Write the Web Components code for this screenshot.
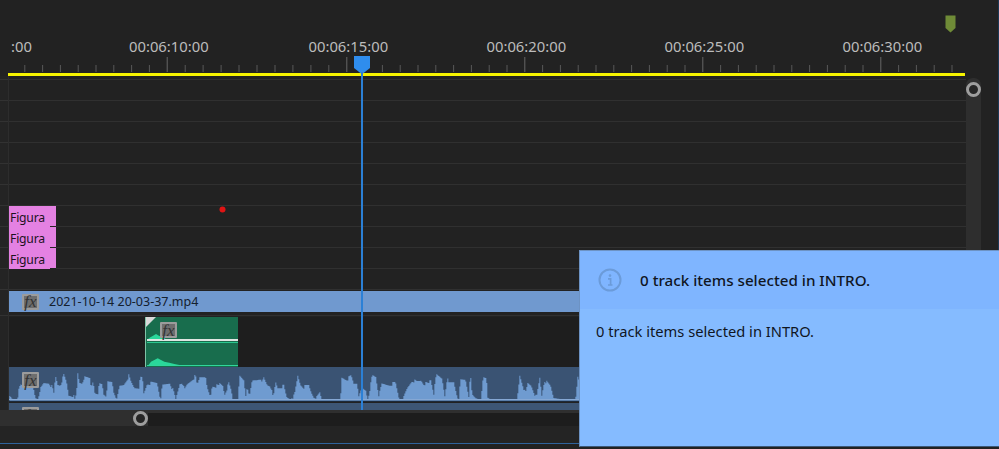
<!DOCTYPE html>
<html>
<head>
<meta charset="utf-8">
<title>Timeline</title>
<style>
  html, body { margin: 0; padding: 0; background: #222222; overflow: hidden; }
</style>
</head>
<body>
<x-timeline>
  <x-ruler slot="ruler"></x-ruler>

  <x-track height="4"></x-track>
  <x-track></x-track>
  <x-track></x-track>
  <x-track></x-track>
  <x-track></x-track>
  <x-track></x-track>
  <x-track></x-track>
  <x-track><x-title-clip>Figura</x-title-clip></x-track>
  <x-track><x-title-clip>Figura</x-title-clip></x-track>
  <x-track><x-title-clip last>Figura</x-title-clip></x-track>
  <x-track></x-track>
  <x-track height="22" noline><x-video-clip>2021-10-14 20-03-37.mp4</x-video-clip></x-track>
  <x-track height="5" noline linetop="3"></x-track>
  <x-track height="50" noline dark><x-audio-green></x-audio-green></x-track>
  <x-track height="36" noline><x-audio-clip></x-audio-clip></x-track>
  <x-track height="7" noline><x-audio-tail></x-audio-tail></x-track>

  <x-notice>0 track items selected in INTRO.</x-notice>
</x-timeline>

<script>
  customElements.define('x-fx', class extends HTMLElement {
    constructor() {
      super();
      this.attachShadow({ mode: 'open' }).innerHTML = `
        <style>
          :host {
            display: flex; align-items: center; justify-content: center; box-sizing: border-box;
            flex: none; position: relative; width: 17px; height: 16px;
            border: 2px solid #9b9b9b; border-radius: 1px; background: #6e6e6e;
            color: #333333; font: italic 17px/1 "Liberation Serif", serif;
          }
        </style>fx`;
    }
  });

  customElements.define('x-wave', class extends HTMLElement {
    static get observedAttributes() { return ['points', 'box', 'fill']; }
    constructor() {
      super();
      this.attachShadow({ mode: 'open' }).innerHTML = `
        <style>
          :host { display: block; position: absolute; left: 0; top: 0; }
          svg { display: block; }
        </style>
        <svg preserveAspectRatio="none"><polygon></polygon></svg>`;
    }
    attributeChangedCallback() {
      const svg = this.shadowRoot.querySelector('svg');
      const poly = this.shadowRoot.querySelector('polygon');
      const box = (this.getAttribute('box') || '0 0 1 1').split(' ').map(Number);
      svg.setAttribute('viewBox', box.join(' '));
      svg.setAttribute('width', box[2] / 3);
      svg.setAttribute('height', box[3] / 3);
      poly.setAttribute('points', this.getAttribute('points') || '');
      poly.setAttribute('fill', this.getAttribute('fill') || '#6f9bd0');
    }
  });

  customElements.define('x-ruler', class extends HTMLElement {
    constructor() {
      super();
      const root = this.attachShadow({ mode: 'open' });
      root.innerHTML = `
        <style>
          :host { display: block; position: relative; height: 76px; }
          .labels {
            display: flex; box-sizing: border-box; margin-left: 8px; width: 957px; height: 56px;
            padding-top: 36px; overflow: hidden; color: #bcbcbc;
            font: 14.8px/20px "Noto Sans", sans-serif;
          }
          .labels span { flex: none; width: 178px; white-space: nowrap; }
          .labels .cut { width: 118px; margin-left: 3px; }
          .labels .wide { width: 179.5px; }
          svg { display: block; }
          .line { margin-left: 8px; width: 957px; height: 3px; background: #f7f400; }
          .head, .marker { position: absolute; }
          .head { left: 354px; top: 56px; }
          .marker { left: 945px; top: 15px; }
        </style>
        <div class="labels">
          <span class="cut">:00</span>
          <span class="wide">00:06:10:00</span>
          <span>00:06:15:00</span>
          <span>00:06:20:00</span>
          <span>00:06:25:00</span>
          <span>00:06:30:00</span>
        </div>
        <svg width="999" height="17"></svg>
        <div class="line"></div>
        <svg class="marker" width="11" height="18"><path d="M0.5 0.5H10.5V13L5.5 17.5L0.5 13Z" fill="#6f8b37"/></svg>
        <svg class="head" width="16" height="18"><path d="M0 0H16V12L9 17.5H7L0 12Z" fill="#2f8ded"/></svg>`;
      // ticks: one second apart is 10 steps, the 10-15 span is a bit wider in the panel
      const majors = [-11.3, 166.7, 346.3, 524.3, 702.3, 880.3, 1058.3];
      let ticks = '';
      for (let m = 0; m < majors.length - 1; m++) {
        const step = (majors[m + 1] - majors[m]) / 10;
        for (let i = 0; i < 10; i++) {
          const x = majors[m] + i * step;
          if (x < 10 || x > 952) continue;
          const top = i === 0 ? 1 : 9;
          ticks += `<rect x="${x.toFixed(1)}" y="${top}" width="1" height="${16 - top}" fill="${i === 0 ? '#666' : '#585858'}"/>`;
        }
      }
      root.querySelector('svg').innerHTML = ticks;
    }
  });

  customElements.define('x-track', class extends HTMLElement {
    constructor() {
      super();
      const h = this.getAttribute('height') || 21;
      const line = this.hasAttribute('noline') ? 'none' : 'linear-gradient(#303030, #303030)';
      const top = this.getAttribute('linetop');
      this.attachShadow({ mode: 'open' }).innerHTML = `
        <style>
          :host {
            display: flex; height: ${h}px; position: relative;
            background: ${top ? 'linear-gradient(#303030, #303030) 0 ' + top + 'px / 100% 1px no-repeat' : line + ' 0 100% / 100% 1px no-repeat'};
          }
          .gutter { flex: none; width: 8px; border-right: 1px solid #2d2d2d; background: rgba(255, 255, 255, 0.012); }
          .lane { flex: 1; min-width: 0; display: flex; align-items: flex-start; ${this.hasAttribute('dark') ? 'background: #1e1e1e;' : ''} }
        </style>
        <div class="gutter"></div>
        <div class="lane"><slot></slot></div>`;
    }
  });

  customElements.define('x-title-clip', class extends HTMLElement {
    constructor() {
      super();
      const last = this.hasAttribute('last');
      this.attachShadow({ mode: 'open' }).innerHTML = `
        <style>
          :host {
            display: block; position: relative; box-sizing: border-box; width: 47px; height: 21px; padding-left: 1px;
            background: #e481e2; color: #1d121d; font: 12.2px/23px "Noto Sans", sans-serif; letter-spacing: -0.2px;
          }
          :host::after {
            content: ""; position: absolute; left: 41px; right: 0; bottom: 0; height: 1px;
            background: ${last ? '#222222' : '#2a2226'};
          }
        </style><slot></slot>`;
    }
  });

  customElements.define('x-video-clip', class extends HTMLElement {
    constructor() {
      super();
      this.attachShadow({ mode: 'open' }).innerHTML = `
        <style>
          :host {
            display: flex; align-items: center; gap: 10px; box-sizing: border-box; flex: 1; height: 21px;
            margin-top: 1px; padding-left: 13px; background: #7099cf; color: #14202e;
            font: 12.5px/21px "Noto Sans", sans-serif; white-space: nowrap;
          }
        </style>
        <x-fx></x-fx><slot></slot>`;
    }
  });

  customElements.define('x-audio-green', class extends HTMLElement {
    constructor() {
      super();
      this.attachShadow({ mode: 'open' }).innerHTML = `
        <style>
          :host {
            display: block; position: relative; box-sizing: border-box; width: 93px; height: 50px;
            margin-left: 136px; padding: 5px 0 0 14px; background: #186d4d; border-left: 1px solid #7fc4a8;
          }
          .rule { position: absolute; left: 1px; right: 0; top: 22px; height: 2px; background: #dfe6e2; }
          .sub { position: absolute; left: 1px; right: 0; top: 25px; height: 1px; background: #2bc78f; }
          .floor { position: absolute; left: 1px; right: 0; bottom: 1px; height: 1px; background: #2fd79b; }
          .corner { position: absolute; left: 0; top: 0; }
        </style>
        <x-wave fill="#2ad79a" box="45 21 279 150"
          points="50,88 58,82 65,78 75,72 85,78 95,80 105,88 50,88 50,168 60,155 70,150 80,145 90,150 100,155 115,158 130,162 145,165 325,168 50,168"></x-wave>
        <div class="rule"></div><div class="sub"></div><div class="floor"></div>
        <x-fx></x-fx>
        <svg class="corner" width="10" height="10"><path d="M0 0H10L0 10Z" fill="#d9d9d9"/></svg>`;
    }
  });

  const wavePts = (() => {
    const a = '28,105 38,113 50,113 55,85 60,70 70,72 75,45 90,50 100,85 105,108 112,112 118,85 130,65 145,62 155,75 160,95 165,42 172,68 180,68 190,40 198,60 205,100 218,100 224,112 228,95 232,35 237,62 245,62 250,48 268,48 272,75 278,55 285,100 292,100 296,65 305,65 310,95 318,100 322,62 335,60 340,90 350,112 357,75 370,68 385,42 392,62 402,78 415,75 420,48 426,48 430,95 440,65 470,62 480,110 486,72 508,62 518,85 526,112 538,65 546,60 552,85 560,68 585,42 590,70 600,40';
    const b = '0,45 14,40 20,80 30,105 35,72 55,72 58,65 68,72 72,98 85,65 92,85 97,112 112,112 118,45 130,55 136,100 140,72 148,100 155,58 170,52 178,48 183,65 190,48 200,68 210,70 218,108 222,85 225,60 232,78 250,72 258,105 270,113 282,100 292,42 300,68 310,75 325,70 332,90 345,112 358,92 364,112 420,112 424,48 440,52 452,42 460,65 470,62 476,105 484,80 496,85 502,112 510,72 515,42 526,45 535,100 540,70 570,68 585,62 596,110 600,112';
    const c = '8,112 20,80 35,55 50,60 62,55 70,65 85,65 90,50 100,95 105,40 125,50 133,100 140,48 145,65 160,60 170,100 175,112 180,55 195,52 205,100 210,40 215,100 232,112 242,112 248,48 258,48 262,105 268,113 350,113 358,40 375,95 382,65 392,70 408,108 418,48 424,100 432,55 450,72 460,108 490,113 525,113 532,40 540,60';
    const shift = (s, dx) => s.split(' ').map(p => {
      const [x, y] = p.split(',').map(Number);
      return [x + dx, y];
    });
    const all = [...shift(a, 0), ...shift(b, 600), ...shift(c, 1200)];
    // resample into thin columns, with a little fixed jitter on the loud parts
    const out = [];
    let seg = 0;
    for (let x = all[0][0]; x <= all[all.length - 1][0]; x += 3) {
      while (seg < all.length - 2 && all[seg + 1][0] <= x) seg++;
      const [x0, y0] = all[seg];
      const [x1, y1] = all[seg + 1];
      let y = y0 + (y1 - y0) * (x - x0) / (x1 - x0);
      if (y < 108) y += ((x * 37) % 11) - 5;
      out.push(x + ',' + y.toFixed(1), (x + 3) + ',' + y.toFixed(1));
    }
    return out.join(' ') + ' 1740,116 28,116';
  })();

  customElements.define('x-audio-clip', class extends HTMLElement {
    constructor() {
      super();
      this.attachShadow({ mode: 'open' }).innerHTML = `
        <style>
          :host {
            display: block; position: relative; box-sizing: border-box; flex: 1; height: 35px;
            padding: 5px 0 0 13px; background: #3a5373; border-bottom: 2px solid #1d2a39;
          }
          .base { position: absolute; left: 0; right: 0; bottom: 0; height: 1px; background: #86a8d4; }
        </style>
        <x-wave box="27 15 1713 101" points="${wavePts}"></x-wave>
        <div class="base"></div>
        <x-fx></x-fx>`;
    }
  });

  customElements.define('x-audio-tail', class extends HTMLElement {
    constructor() {
      super();
      this.attachShadow({ mode: 'open' }).innerHTML = `
        <style>
          :host {
            display: block; box-sizing: border-box; flex: 1; height: 7px; overflow: hidden;
            padding: 4px 0 0 13px; background: #3d5675;
          }
        </style>
        <x-fx></x-fx>`;
    }
  });

  customElements.define('x-thumb', class extends HTMLElement {
    constructor() {
      super();
      this.attachShadow({ mode: 'open' }).innerHTML = `
        <style>
          :host {
            display: block; flex: none; box-sizing: border-box; width: 15px; height: 15px;
            border: 3px solid #9e9e9e; border-radius: 50%; background: #262626;
          }
        </style>`;
    }
  });

  customElements.define('x-notice', class extends HTMLElement {
    constructor() {
      super();
      const text = this.textContent;
      this.attachShadow({ mode: 'open' }).innerHTML = `
        <style>
          :host {
            display: block; position: absolute; left: 579px; top: 250px; width: 420px; height: 197px;
            box-sizing: border-box; border-left: 1px solid #6d93c4; border-top: 1px solid #6d93c4;
            border-bottom: 1px solid #3b5878; background: #85bbff; color: #10161f;
            font-family: "Noto Sans", sans-serif;
          }
          header {
            display: flex; align-items: center; gap: 18px; box-sizing: border-box; height: 58px;
            padding-left: 18px; background: #7fb5ff; font-size: 15.2px; font-weight: 500;
          }
          svg { display: block; flex: none; }
          p { margin: 0; padding: 12px 0 0 16px; font-size: 14.7px; line-height: 20px; }
        </style>
        <header>
          <svg width="24" height="24" viewBox="0 0 24 24" fill="none" stroke="#6b9bd9">
            <circle cx="12" cy="12" r="10.5" stroke-width="2"/>
            <circle cx="12" cy="7.6" r="1.3" fill="#6b9bd9" stroke="none"/>
            <path d="M10 10.8H12.6V16.6M10 17H14.5" stroke-width="1.7"/>
          </svg>
          <span>${text}</span>
        </header>
        <p>${text}</p>`;
    }
  });

  customElements.define('x-timeline', class extends HTMLElement {
    constructor() {
      super();
      this.attachShadow({ mode: 'open' }).innerHTML = `
        <style>
          :host { display: block; position: relative; width: 999px; height: 449px; overflow: hidden; background: #222222; }
          .top { display: grid; grid-template-columns: 966px 15px 1fr; height: 410px; }
          .main { min-width: 0; }
          .vbar {
            margin-top: 78px; padding-top: 4px; background: #2e2e2e; border-radius: 7px 7px 0 0;
          }
          .edge { border-right: 1px solid #1c3957; }
          .hbar { display: flex; align-items: center; height: 16px; background: #2f2f2f; }
          .hbar x-thumb { margin-left: 133px; }
          .hbar .rest { flex: 1; height: 13px; margin-top: 2px; background: #1d1d1d; }
          .foot { height: 17px; border-bottom: 1px solid #2f639c; background: #242424; }
          .playhead { position: absolute; left: 361px; top: 72px; width: 2px; height: 338px; background: #2b80d6; }
        </style>
        <div class="top">
          <div class="main">
            <slot name="ruler"></slot>
            <slot></slot>
          </div>
          <div class="vbar"><x-thumb></x-thumb></div>
          <div class="edge"></div>
        </div>
        <div class="hbar"><x-thumb></x-thumb><div class="rest"></div></div>
        <div class="foot"></div>
        <div class="playhead"></div>
        <svg style="position:absolute;left:219px;top:206px" width="7" height="7"><circle cx="3.5" cy="3.5" r="3" fill="#e01414"/></svg>`;
    }
  });
</script>
</body>
</html>
